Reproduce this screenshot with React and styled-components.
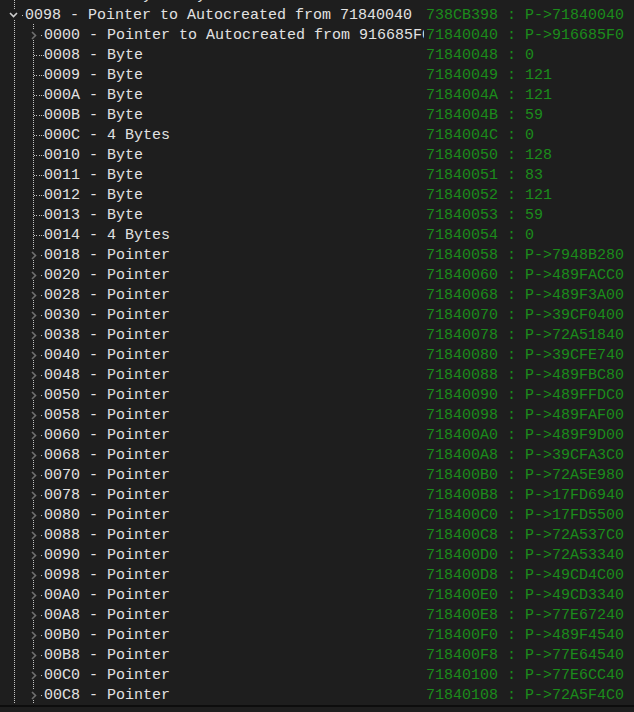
import React from 'react'
import styled, { createGlobalStyle } from 'styled-components'

const GlobalStyle = createGlobalStyle`
	html, body {
		margin: 0;
		padding: 0;
		background: #1e1e1e;
	}
`

const DOT = '#c4c4c4'

const TreePanel = styled.div`
	height: 705px;
	overflow: hidden;
	background: #1e1e1e;
	border-bottom: 2px solid #0d0d0d;
	font-family: "Liberation Mono", "Courier New", monospace;
	font-size: 15px;
`

const TreeList = styled.div`
	display: flex;
	flex-direction: column;
	margin-top: -16px;
`

const Row = styled.div`
	display: flex;
	height: 20px;
	line-height: 24px;
	white-space: nowrap;
`

const NameColumn = styled.div`
	display: flex;
	width: 424px;
	height: 20px;
	flex: none;
	overflow: hidden;
`

const GuideCell = styled.div`
	width: 19px;
	height: 20px;
	flex: none;
	background-image: linear-gradient(to bottom, ${DOT} 50%, transparent 50%);
	background-size: 1px 2px;
	background-repeat: repeat-y;
	background-position: 14px 0;
`

const ToggleCell = styled(GuideCell)`
	${({ $last }) => $last && `
		background-image: repeating-linear-gradient(to bottom, ${DOT} 0 1px, transparent 1px 2px);
		background-size: 1px 12px;
		background-repeat: no-repeat;
	`}
	${({ $leaf }) => $leaf && `
		background-image:
			repeating-linear-gradient(to bottom, ${DOT} 0 1px, transparent 1px 2px),
			linear-gradient(to right, transparent 50%, ${DOT} 50%);
		background-size: 1px 20px, 2px 1px;
		background-repeat: no-repeat, repeat-x;
		background-position: 14px 0, 0 11px;
		background-clip: border-box, content-box;
		padding-left: 15px;
		box-sizing: border-box;
	`}
	${({ $leaf, $last }) => $leaf && $last && `
		background-size: 1px 12px, 2px 1px;
	`}
`

const ChevronBox = styled.span`
	display: flex;
	align-items: center;
	justify-content: center;
	width: 9px;
	height: 10px;
	margin-top: 6px;
	margin-left: ${({ $open }) => ($open ? '9px' : '10px')};
	background: #1e1e1e;
`

const Connector = styled.div`
	width: 6px;
	height: 20px;
	flex: none;
	background-image: linear-gradient(to right, ${DOT} 50%, transparent 50%);
	background-size: 2px 1px;
	background-repeat: repeat-x;
	background-position: 1px 11px;
	${({ $leaf }) => !$leaf && `
		background-size: 1px 1px;
		background-repeat: no-repeat;
		background-position: 3px 11px;
		background-image: linear-gradient(${DOT}, ${DOT});
	`}
`

const NameText = styled.span`
	color: #e2e2e2;
`

const ValueText = styled.span`
	padding-left: 2px;
	color: #1b8c1b;
`

const ChevronDown = () => (
	<svg width="9" height="6" viewBox="0 0 9 6">
		<path d="M1 1 L4.5 4.5 L8 1" fill="none" stroke="#cfcfcf" strokeWidth="1.6" />
	</svg>
)

const ChevronRight = () => (
	<svg width="6" height="9" viewBox="0 0 6 9">
		<path d="M1 1 L4.5 4.5 L1 8" fill="none" stroke="#707070" strokeWidth="1.6" />
	</svg>
)

const hex = (n, len) => n.toString(16).toUpperCase().padStart(len, '0')

const BASE = 0x71840040

const leaves = [
	[0x08, 'Byte', '0'],
	[0x09, 'Byte', '121'],
	[0x0a, 'Byte', '121'],
	[0x0b, 'Byte', '59'],
	[0x0c, '4 Bytes', '0'],
	[0x10, 'Byte', '128'],
	[0x11, 'Byte', '83'],
	[0x12, 'Byte', '121'],
	[0x13, 'Byte', '59'],
	[0x14, '4 Bytes', '0'],
]

const pointers = [
	[0x18, '7948B280'],
	[0x20, '489FACC0'],
	[0x28, '489F3A00'],
	[0x30, '39CF0400'],
	[0x38, '72A51840'],
	[0x40, '39CFE740'],
	[0x48, '489FBC80'],
	[0x50, '489FFDC0'],
	[0x58, '489FAF00'],
	[0x60, '489F9D00'],
	[0x68, '39CFA3C0'],
	[0x70, '72A5E980'],
	[0x78, '17FD6940'],
	[0x80, '17FD5500'],
	[0x88, '72A537C0'],
	[0x90, '72A53340'],
	[0x98, '49CD4C00'],
	[0xa0, '49CD3340'],
	[0xa8, '77E67240'],
	[0xb0, '489F4540'],
	[0xb8, '77E64540'],
	[0xc0, '77E6CC40'],
	[0xc8, '72A5F4C0'],
]

const rows = [
	{ level: 1, kind: 'leaf', last: true, name: '00F8 - Array of byte', value: '91668638 : 00 00 00 00' },
	{ level: 0, kind: 'open', name: '0098 - Pointer to Autocreated from 71840040', value: '738CB398 : P->71840040' },
	{ level: 1, kind: 'closed', name: '0000 - Pointer to Autocreated from 916685F0', value: '71840040 : P->916685F0' },
	...leaves.map(([off, type, val]) => ({
		level: 1,
		kind: 'leaf',
		name: `${hex(off, 4)} - ${type}`,
		value: `${hex(BASE + off, 8)} : ${val}`,
	})),
	...pointers.map(([off, target]) => ({
		level: 1,
		kind: 'closed',
		name: `${hex(off, 4)} - Pointer`,
		value: `${hex(BASE + off, 8)} : P->${target}`,
	})),
]

const TreeRow = ({ level, kind, last, name, value }) => (
	<Row>
		<NameColumn>
			{Array.from({ length: level }, (_, i) => <GuideCell key={i} />)}
			<ToggleCell $leaf={kind === 'leaf'} $last={last}>
				{kind !== 'leaf' && (
					<ChevronBox $open={kind === 'open'}>
						{kind === 'open' ? <ChevronDown /> : <ChevronRight />}
					</ChevronBox>
				)}
			</ToggleCell>
			<Connector $leaf={kind === 'leaf'} />
			<NameText>{name}</NameText>
		</NameColumn>
		<ValueText>{value}</ValueText>
	</Row>
)

const App = () => (
	<>
		<GlobalStyle />
		<TreePanel>
			<TreeList>
				{rows.map(row => <TreeRow key={`${row.level}-${row.name}`} {...row} />)}
			</TreeList>
		</TreePanel>
	</>
)

export default App
